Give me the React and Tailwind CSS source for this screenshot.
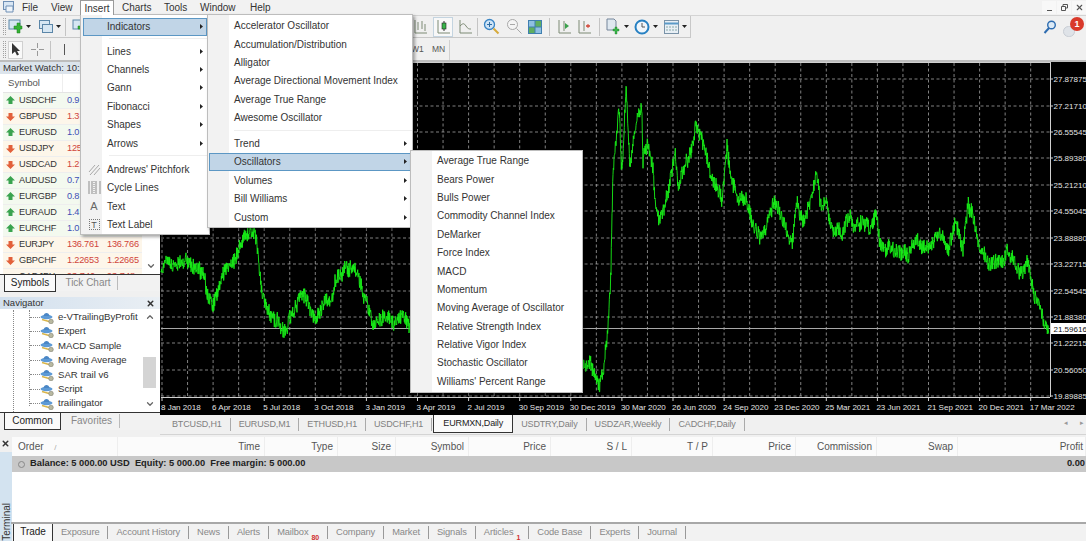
import { useMemo } from 'react';
import { X, ChevronUp, ChevronDown } from 'lucide-react';

const FONT = 'font-["Liberation_Sans",Arial,sans-serif]';

const KEYS = [
  [161, 272], [168, 262], [176, 268], [186, 262], [195, 266], [203, 272], [208, 295], [213, 306], [219, 288], [226, 270],
  [232, 262], [238, 256], [244, 240], [251, 232], [256, 240], [263, 295], [270, 312], [278, 325], [284, 334], [292, 315],
  [300, 295], [308, 306], [315, 320], [322, 305], [330, 302], [338, 275], [348, 267], [354, 270], [362, 290], [370, 312],
  [375, 326], [383, 318], [392, 320], [402, 316], [409, 325], [450, 280], [500, 300], [560, 340],
  [584, 360], [590, 362], [595, 378], [599, 386], [603, 370], [608, 325], [611, 270], [613, 170], [619, 108], [622, 175],
  [626, 86], [630, 170], [638, 115], [642, 108], [643, 160], [648, 140], [653, 170], [656, 212], [660, 222], [667, 195],
  [675, 155], [678, 185], [692, 150], [696, 125], [708, 157], [722, 200], [727, 145], [732, 187], [747, 203], [753, 228],
  [760, 238], [772, 212], [775, 200], [792, 243], [797, 203], [802, 223], [810, 204], [817, 175], [820, 200], [827, 205],
  [832, 233], [843, 233], [850, 217], [857, 228], [863, 220], [872, 230], [877, 214], [880, 245], [893, 250], [908, 254],
  [915, 239], [928, 253], [940, 234], [948, 251], [955, 228], [963, 254], [968, 200], [980, 248], [992, 266], [1005, 260],
  [1008, 247], [1020, 273], [1027, 262], [1037, 303], [1049, 334],
];

// price line: key points with seeded jitter so it looks like real ticks
function buildLine() {
  let seed = 48271;
  const rnd = () => {
    seed = (seed * 16807) % 2147483647;
    return seed / 2147483647 - 0.5;
  };
  const pts = [];
  let walk = 0;
  for (let i = 0; i < KEYS.length - 1; i++) {
    const [x0, y0] = KEYS[i];
    const [x1, y1] = KEYS[i + 1];
    const steps = Math.max(2, Math.round((x1 - x0) * 3));
    for (let s = 0; s < steps; s++) {
      const t = s / steps;
      walk = walk * 0.9 + rnd() * 3.5;
      pts.push(`${(x0 + (x1 - x0) * t).toFixed(1)},${(y0 + (y1 - y0) * t + walk + rnd() * 15).toFixed(1)}`);
    }
  }
  return pts.join(' ');
}

const PRICES = [
  [79, '27.87875'], [106, '27.21710'], [132, '26.55545'], [158, '25.89380'], [185, '25.21210'], [211, '24.55045'], [238, '23.88880'],
  [264, '23.22715'], [291, '22.54545'], [317, '21.88380'], [343, '21.22215'], [370, '20.56050'], [396, '19.89885'],
];
const DATES = [
  '8 Jan 2018', '6 Apr 2018', '5 Jul 2018', '3 Oct 2018', '3 Jan 2019', '3 Apr 2019', '2 Jul 2019', '30 Sep 2019', '30 Dec 2019',
  '30 Mar 2020', '26 Jun 2020', '24 Sep 2020', '23 Dec 2020', '25 Mar 2021', '23 Jun 2021', '21 Sep 2021', '20 Dec 2021', '17 Mar 2022',
];
const GRID_X = Array.from({ length: 35 }, (_, i) => 162 + i * 25.55);

function Chart() {
  const line = useMemo(buildLine, []);
  return (
    <svg viewBox="160 62 926 353" className="block w-[926px] h-[353px] bg-black">
      <g stroke="#b8b8b8" strokeWidth="0.7" strokeDasharray="3 2.5">
        {PRICES.map(([y]) => <line key={y} x1="161" x2="1050" y1={y} y2={y} />)}
        {GRID_X.map((x) => <line key={x} x1={x} x2={x} y1="63" y2="397" />)}
      </g>
      <g stroke="#d0d0d0" strokeWidth="1">
        <line x1="161" x2="1050" y1="62.5" y2="62.5" />
        <line x1="1050.5" x2="1050.5" y1="62" y2="397" />
        <line x1="161" x2="1050" y1="397.5" y2="397.5" />
        <line x1="161" x2="1050" y1="328.5" y2="328.5" stroke="#a8a8a8" />
        {PRICES.map(([y]) => <line key={y} x1="1050" x2="1053" y1={y} y2={y} />)}
        {DATES.map((d, i) => <line key={d} x1={162 + i * 51.1} x2={162 + i * 51.1} y1="397" y2="401" />)}
      </g>
      <polyline points={line} fill="none" stroke="#17ee17" strokeWidth="0.9" strokeLinejoin="round" />
      <g fill="#e4e4e4" fontSize="8">
        {PRICES.map(([y, p]) => <text key={p} x="1053.500" y={y + 3}>{p}</text>)}
        {DATES.map((d, i) => <text key={d} x={161 + i * 51.1} y="410">{d}</text>)}
      </g>
      <rect x="1051" y="323" width="35" height="11" fill="#fff" />
      <text x="1053.500" y="331.500" fontSize="8" fill="#111">21.59616</text>
    </svg>
  );
}

/* ---- small drawn icons ---- */
function Grip() {
  return <div className="w-[3px] h-[17px] ml-[3px] border-x border-dotted border-[#a0a0a0]" />;
}
function Caret() {
  return <svg width="5" height="3" viewBox="0 0 5 3" className="ml-[3px]"><path d="M0 0h5L2.5 3z" fill="#222" /></svg>;
}
function Arrow() {
  return <svg width="3" height="5" viewBox="0 0 3 5" className="ml-auto"><path d="M0 0l3 2.5L0 5z" fill="#222" /></svg>;
}
function Sep() {
  return <div className="w-px h-[18px] bg-[#c4c4c4]" />;
}
function Axes({ children }) {
  return (
    <svg width="16" height="16" viewBox="0 0 16 16" fill="none">
      <path d="M3 1v13h12" stroke="#7d8a74" strokeWidth="1" />
      {children}
    </svg>
  );
}
function NewChart() {
  return (
    <svg width="15" height="15" viewBox="0 0 15 15">
      <rect x="1" y="1" width="11" height="9" fill="#d6e6f2" stroke="#5b86a8" />
      <path d="M7 5h3V2h3v3h2v3h-2v4h-3V8H7z" transform="translate(-1 2)" fill="#35b335" stroke="#1d7d1d" strokeWidth=".5" />
    </svg>
  );
}
function Profiles() {
  return (
    <svg width="15" height="15" viewBox="0 0 15 15" fill="#d6e6f2" stroke="#5b86a8">
      <rect x="1.5" y="1.5" width="10" height="8" />
      <rect x="4.5" y="5.5" width="10" height="8" />
    </svg>
  );
}

function MenuIcon({ kind }) {
  if (kind === 'fork') return <svg width="13" height="13" viewBox="0 0 13 13" stroke="#a8a8a8" fill="none"><path d="M1 9l6-7M2 12l9-10M6 12l6-7" /></svg>;
  if (kind === 'cycle') return <svg width="13" height="13" viewBox="0 0 13 13" stroke="#8c8c8c" fill="none"><path d="M1 0v13M4 0v13M8 0v13M12 0v13" /><path d="M6 0v13" strokeDasharray="1 1" /></svg>;
  if (kind === 'text') return <span className="text-[11px] text-[#666]">A</span>;
  if (kind === 'label') return <span className="w-[11px] h-[11px] border border-dotted border-[#777] text-[9px] leading-[10px] text-center text-[#555]">T</span>;
  return null;
}

function NavIcon() {
  return (
    <svg width="14" height="13" viewBox="0 0 14 13" className="shrink-0">
      <ellipse cx="6.5" cy="6" rx="6" ry="2.2" fill="#5d9ad6" />
      <path d="M3.5 5C4 1 9 1 9.5 5z" fill="#4a86c5" />
      <path d="M2 8.5l7 2" stroke="#d9b54a" strokeWidth="1.4" />
      <circle cx="11" cy="10.5" r="2.3" fill="#b8b8a0" stroke="#808070" strokeWidth=".6" />
    </svg>
  );
}

function TickIcon({ up }) {
  return (
    <svg width="9" height="9" viewBox="0 0 9 9" className="shrink-0">
      {up
        ? <path d="M4.5 0L9 4.5H6.5V8h-4V4.5H0z" fill="#39a34f" />
        : <path d="M4.5 9L0 4.5h2.500V1h4v3.500H9z" fill="#e2603a" />}
    </svg>
  );
}

/* ---- menus ---- */
function MenuRow({ label, arrow, active, icon, left }) {
  return (
    <div className={`flex items-center h-[18.4px] border whitespace-nowrap ${active ? 'bg-[#c1d5e7] border-[#5c97c4]' : 'border-transparent'}`}>
      <span className="w-[20px] flex justify-center shrink-0"><MenuIcon kind={icon} /></span>
      <span className={left}>{label}</span>
      {arrow && <span className="ml-auto pr-[3px] flex"><Arrow /></span>}
    </div>
  );
}

function Menu({ className, children }) {
  return (
    <div className={`absolute z-20 bg-white text-[10px] text-[#333] border border-[#bdbdbd] shadow-[2px_2px_3px_rgba(0,0,0,.35)] ${className}`}>
      <div className="absolute inset-y-0 left-0 w-[21px] bg-[#f2f2f2]" />
      <div className="relative">{children}</div>
    </div>
  );
}

const OSC = [
  'Average True Range', 'Bears Power', 'Bulls Power', 'Commodity Channel Index', 'DeMarker', 'Force Index', 'MACD', 'Momentum',
  'Moving Average of Oscillator', 'Relative Strength Index', 'Relative Vigor Index', 'Stochastic Oscillator', "Williams' Percent Range",
];

function Menus() {
  return (
    <>
      <Menu className="left-[80px] top-[14px] w-[130px] h-[221px] pt-[2.5px]">
        <div className="px-[2px]"><MenuRow label="Indicators" arrow active left="pl-[3px]" /></div>
        <div className="h-[6px] ml-[28px] border-b border-[#eeeeee] -translate-y-[3px]" />
        <div className="px-[2px]">
          {['Lines', 'Channels', 'Gann', 'Fibonacci', 'Shapes', 'Arrows'].map((m) => <MenuRow key={m} label={m} arrow left="pl-[3px]" />)}
        </div>
        <div className="h-[8px] ml-[28px] border-b border-[#eeeeee] -translate-y-[4px]" />
        <div className="px-[2px]">
          <MenuRow label="Andrews' Pitchfork" icon="fork" left="pl-[3px]" />
          <MenuRow label="Cycle Lines" icon="cycle" left="pl-[3px]" />
          <MenuRow label="Text" icon="text" left="pl-[3px]" />
          <MenuRow label="Text Label" icon="label" left="pl-[3px]" />
        </div>
      </Menu>
      <Menu className="left-[207px] top-[14px] w-[206px] h-[214px] pt-[1.5px]">
        <div className="px-px">
          {['Accelerator Oscillator', 'Accumulation/Distribution', 'Alligator', 'Average Directional Movement Index', 'Average True Range', 'Awesome Oscillator'].map((m) => (
            <MenuRow key={m} label={m} left="pl-[4px]" />
          ))}
        </div>
        <div className="h-[7.5px] ml-[26px] border-b border-[#eeeeee] -translate-y-[3px]" />
        <div className="px-px">
          <MenuRow label="Trend" arrow left="pl-[4px]" />
          <MenuRow label="Oscillators" arrow active left="pl-[4px]" />
          <MenuRow label="Volumes" arrow left="pl-[4px]" />
          <MenuRow label="Bill Williams" arrow left="pl-[4px]" />
          <MenuRow label="Custom" arrow left="pl-[4px]" />
        </div>
      </Menu>
      <Menu className="left-[410px] top-[150px] w-[173px] h-[243px] pt-[0.5px]">
        <div className="px-px">
          {OSC.map((m) => <MenuRow key={m} label={m} left="pl-[4px]" />)}
        </div>
      </Menu>
    </>
  );
}

/* ---- top bars ---- */
function MenuBar() {
  return (
    <div className="flex items-center h-[16px] border-b border-[#d4d4d4] text-[10px] text-[#333] bg-[#f2f2f2] relative">
      <svg width="13" height="13" viewBox="0 0 13 13" className="absolute left-[3px] top-px">
        <rect x=".5" y=".5" width="10" height="8" fill="#d8e6f4" stroke="#6f8fb5" />
        <path d="M3 5h7v6H3z" fill="#eef4fa" stroke="#6f8fb5" />
      </svg>
      <span className="ml-[22px] w-[17px]">File</span>
      <span className="ml-[12px] w-[22px]">View</span>
      <span className="ml-[7px] w-[34px] text-center h-[15px] leading-[15px] border-x border-t border-[#9a9a9a] bg-white z-30">Insert</span>
      <span className="ml-[8px] w-[30px]">Charts</span>
      <span className="ml-[12px] w-[25px]">Tools</span>
      <span className="ml-[11px] w-[37px]">Window</span>
      <span className="ml-[13px]">Help</span>
      <div className="ml-auto flex items-center h-[15px] text-[#555]">
        <span className="w-[14px] h-[13px] bg-[#f8f8f8] flex items-end justify-center pb-[3px]"><span className="w-[5px] h-px bg-[#555]" /></span>
        <span className="w-[14px] h-[13px] ml-px bg-[#f8f8f8] flex items-center justify-center">
          <svg width="7" height="7" viewBox="0 0 7 7" fill="none" stroke="#555"><path d="M2 2V.5h4.500V4H5M.5 2.500H4.500V6.500H.5z" /></svg>
        </span>
        <span className="w-[14px] h-[13px] ml-px bg-[#f8f8f8] flex items-center justify-center"><X size={9} strokeWidth={3} className="text-[#555]" /></span>
      </div>
    </div>
  );
}

function ToolbarOne() {
  return (
    <div className="flex h-[23px] bg-[#f0f0f0]">
      <div className="flex items-center w-[691px] h-[22px] border-b border-r border-[#c8c8c8]">
        <Grip />
        <span className="ml-[2px] flex items-center"><NewChart /><Caret /></span>
        <span className="ml-[7px] flex items-center"><Profiles /><Caret /></span>
        <span className="ml-[4px]"><Sep /></span>
        <span className="ml-[6px]"><NewChart /></span>
        <span className="ml-[325px]"><Axes><path d="M6 3v8M10 2v8M13 5v7" stroke="#7d8a74" /></Axes></span>
        <span className="ml-[5px] w-[20px] h-[20px] bg-[#f8f8f8] border border-[#c4d4e0] flex items-center justify-center">
          <Axes><path d="M9 2v10" stroke="#333" /><rect x="7" y="4" width="4" height="6" fill="#39b54a" stroke="#222" strokeWidth=".6" /></Axes>
        </span>
        <span className="ml-[4px]"><Axes><path d="M3 7c3-3 4-3 6 0s3 3 5 3" stroke="#7d8a74" /></Axes></span>
        <span className="ml-[4px]"><Sep /></span>
        <span className="ml-[5px]">
          <svg width="17" height="17" viewBox="0 0 17 17" fill="none">
            <circle cx="6.500" cy="6.500" r="5" fill="#cfe4f6" stroke="#3a85c5" strokeWidth="1.300" />
            <path d="M4 6.500h5M6.500 4v5" stroke="#2e6da6" />
            <path d="M10.500 10.500l5 5" stroke="#d6aa3c" strokeWidth="2" />
          </svg>
        </span>
        <span className="ml-[6px]">
          <svg width="17" height="17" viewBox="0 0 17 17" fill="none" stroke="#a8a8a8">
            <circle cx="6.500" cy="6.500" r="5" fill="#f4f4f4" />
            <path d="M4 6.500h5M10.500 10.500l5 5" />
          </svg>
        </span>
        <span className="ml-[5px]">
          <svg width="14" height="14" viewBox="0 0 14 14">
            <rect width="14" height="14" fill="#3f7fb0" />
            <rect x="1" y="1" width="5.500" height="5.500" fill="#8fc0e2" />
            <rect x="7.500" y="1" width="5.500" height="5.500" fill="#5fae60" />
            <rect x="1" y="7.500" width="5.500" height="5.500" fill="#5fae60" />
            <rect x="7.500" y="7.500" width="5.500" height="5.500" fill="#8fc0e2" />
          </svg>
        </span>
        <span className="ml-[7px]"><Sep /></span>
        <span className="ml-[6px]"><Axes><path d="M8 2v10" stroke="#7d8a74" /><path d="M9 4l4 3-4 3z" fill="#3aa14c" /></Axes></span>
        <span className="ml-[4px]"><Axes><path d="M8 2v10" stroke="#7d8a74" /><path d="M10 7h4" stroke="#d04030" strokeWidth="1.500" /><path d="M12 5v4" stroke="#d04030" /></Axes></span>
        <span className="ml-[7px]"><Sep /></span>
        <span className="ml-[6px] flex items-center">
          <svg width="15" height="17" viewBox="0 0 15 17">
            <path d="M1 1h7l2 2v9H1z" fill="#dfe8f0" stroke="#74859a" />
            <path d="M8 9h2V7h2v2h2v2h-2v3h-2v-3H8z" transform="translate(-1 2)" fill="#39b54a" stroke="#1f7f2a" strokeWidth=".4" />
          </svg>
          <Caret />
        </span>
        <span className="ml-[5px] flex items-center">
          <svg width="16" height="16" viewBox="0 0 16 16" fill="none">
            <circle cx="8" cy="8" r="6.500" fill="#f0f6fb" stroke="#2680c2" strokeWidth="2" />
            <path d="M8 4v4h3" stroke="#555" />
          </svg>
          <Caret />
        </span>
        <span className="ml-[6px] flex items-center">
          <svg width="15" height="14" viewBox="0 0 15 14" fill="none">
            <rect x=".5" y=".5" width="14" height="13" fill="#e8eff5" stroke="#7a93a8" />
            <path d="M.5 3.500h14" stroke="#5a9ac8" strokeWidth="2" />
            <path d="M2 7h11M2 10h11" stroke="#8aa" strokeDasharray="2 1" />
          </svg>
          <Caret />
        </span>
      </div>
      <div className="ml-auto flex items-center pr-[2px] h-[22px]">
        <svg width="14" height="15" viewBox="0 0 14 15" fill="none">
          <circle cx="8.500" cy="5" r="3.800" fill="#dceaf6" stroke="#2e6cb0" strokeWidth="1.400" />
          <path d="M6 8L1.500 13" stroke="#2e6cb0" strokeWidth="2" />
        </svg>
        <span className="relative ml-[6px] w-[21px] h-[20px]">
          <span className="absolute left-0 bottom-0 w-[12px] h-[11px] rounded-full bg-[#dfe3e8] border border-[#c8cdd4]" />
          <span className="absolute right-0 top-0 w-[14px] h-[14px] rounded-full bg-[#d93a2b] text-white text-[9px] font-bold leading-[14px] text-center">1</span>
        </span>
      </div>
    </div>
  );
}

function ToolbarTwo() {
  return (
    <div className="flex items-center h-[23px] border-b-2 border-[#bdbdbd] bg-[#f0f0f0] text-[8.5px] text-[#555]">
      <Grip />
      <span className="ml-[2px] w-[15px] h-[18px] bg-[#f9f9f9] border border-[#d0d0d0] flex items-center justify-center">
        <svg width="9" height="13" viewBox="0 0 9 13"><path d="M1 0v11l3-2.500 2 4 2-1-2-3.500h3z" fill="#333" /></svg>
      </span>
      <span className="ml-[8px]">
        <svg width="13" height="13" viewBox="0 0 13 13" stroke="#999"><path d="M6.500 0v5M6.500 8v5M0 6.500h5M8 6.500h5" /></svg>
      </span>
      <span className="ml-[6px]"><Sep /></span>
      <span className="ml-[13px] w-px h-[11px] bg-[#555]" />
      <span className="ml-[346px] w-[11px]">W1</span>
      <span className="ml-[10px] w-[14px]">MN</span>
      <span className="ml-[3px] w-px h-[20px] bg-[#d0d0d0]" />
    </div>
  );
}

/* ---- left panes ---- */
const SYMBOLS = [
  ['USDCHF', true, '0.9'], ['GBPUSD', false, '1.3'], ['EURUSD', true, '1.0'], ['USDJPY', false, '125'], ['USDCAD', false, '1.2'], ['AUDUSD', true, '0.7'],
  ['EURGBP', true, '0.8'], ['EURAUD', true, '1.4'], ['EURCHF', true, '1.0'], ['EURJPY', false, '136.761', '136.766'], ['GBPCHF', false, '1.22653', '1.22665'],
];

function PaneTab({ active, children, w }) {
  return active
    ? <span className={`${w} h-[17px] bg-[#fafafa] border-x border-b border-[#333] text-center text-[#222] leading-[16px]`}>{children}</span>
    : <span className={`${w} h-[14px] mt-px text-center text-[#888] border-r border-[#bbb] leading-[14px]`}>{children}</span>;
}

function MarketWatch() {
  return (
    <div className="h-[229px] flex flex-col">
      <div className="h-[12px] leading-[12px] bg-[#dce4ec] text-[9.5px] text-[#333] pl-[3px]">Market Watch: 10:2</div>
      <div className="flex flex-1 min-h-0 bg-white pl-[3px]">
        <div className="w-[139px] overflow-hidden text-[9.2px]">
          <div className="flex h-[19px] items-center text-[#555] border-b border-[#e4e4e4] text-[9.6px]">
            <span className="w-[59px] pl-[5px]">Symbol</span>
            <span className="w-[40px] border-l border-[#eee] h-full" />
          </div>
          {SYMBOLS.map(([s, up, bid, ask]) => (
            <div key={s} className={`flex h-[16px] items-center border-b border-[#eeeeee] ${up ? 'bg-[#f3f9ef]' : 'bg-[#fdf6ea]'}`}>
              <span className="w-[59px] flex items-center pl-[3px] gap-[4px] text-[#333] tracking-[-0.2px]">
                <TickIcon up={up} />{s}
              </span>
              <span className={`w-[40px] pl-[5px] tracking-[-0.2px] ${up ? 'text-[#3d4fb5]' : 'text-[#d0453a]'}`}>{bid}</span>
              <span className="w-[40px] pl-[5px] tracking-[-0.2px] text-[#d0453a]">{ask}</span>
            </div>
          ))}
          <div className="flex h-[6px] overflow-hidden bg-[#fdf6ea] text-[#d0453a] leading-[14px]">
            <span className="w-[59px] pl-[16px] text-[#333]">CADJPY</span>
            <span className="w-[40px] pl-[5px]">93.740</span>
            <span className="w-[40px] pl-[5px]">93.748</span>
          </div>
        </div>
        <div className="flex-1 flex items-end justify-center pb-[3px]"><ChevronDown size={10} strokeWidth={3} className="text-[#666]" /></div>
      </div>
      <div className="h-[17px] flex border-t border-[#333] pl-[4px] gap-[3px] bg-[#f2f2f2] text-[10px]">
        <PaneTab active w="w-[52px]">Symbols</PaneTab>
        <PaneTab w="w-[59px]">Tick Chart</PaneTab>
      </div>
    </div>
  );
}

const EXPERTS = ['e-VTrailingByProfit', 'Expert', 'MACD Sample', 'Moving Average', 'SAR trail v6', 'Script', 'trailingator'];

function Navigator() {
  return (
    <div className="mt-[6px] flex flex-col h-[133px]">
      <div className="h-[12px] flex items-center justify-between bg-gradient-to-r from-[#d2e0ee] to-[#eaeff4] text-[9.5px] text-[#333] pl-[3px] pr-[5px]">
        Navigator <X size={9} strokeWidth={4} className="text-[#333]" />
      </div>
      <div className="flex h-[103px] bg-white pl-[3px] overflow-hidden text-[9.6px]">
        <div className="w-[139px] pl-[10px] pt-[1px] flex">
          <div className="w-[16px] border-l border-dotted border-[#888]" />
          <div className="border-l border-dotted border-[#888] h-[96px]">
            {EXPERTS.map((n) => (
              <div key={n} className="flex items-center h-[14.400px] text-[#333] whitespace-nowrap">
                <span className="w-[10px] shrink-0 border-b border-dotted border-[#888]" />
                <NavIcon />
                <span className="ml-[4px]">{n}</span>
              </div>
            ))}
          </div>
        </div>
        <div className="w-[13px] ml-px flex flex-col items-center py-[3px]">
          <ChevronUp size={10} strokeWidth={3} className="text-[#666]" />
          <div className="w-full h-[31px] mt-[35px] bg-[#d4d4d4]" />
          <ChevronDown size={10} strokeWidth={3} className="text-[#666] mt-auto" />
        </div>
      </div>
      <div className="h-[18px] flex border-t border-[#333] pl-[4px] gap-[3px] bg-[#f2f2f2] text-[10px]">
        <PaneTab active w="w-[57px]">Common</PaneTab>
        <PaneTab w="w-[56px]">Favorites</PaneTab>
      </div>
    </div>
  );
}

/* ---- chart tabs + terminal ---- */
const CHART_TABS = ['BTCUSD,H1', 'EURUSD,M1', 'ETHUSD,H1', 'USDCHF,H1'];
const CHART_TABS2 = ['USDTRY,Daily', 'USDZAR,Weekly', 'CADCHF,Daily'];

function ChartTabs() {
  return (
    <div className="flex h-[20px] items-start bg-[#f0f0f0] text-[9px] tracking-[-0.15px] text-[#808080] border-b border-[#d4d4d4] pl-[4px]">
      {CHART_TABS.map((t) => (
        <span key={t} className="px-[8px] mt-[3px] h-[13px] leading-[13px] border-r border-[#aaa]">{t}</span>
      ))}
      <span className="w-[80px] h-[18px] leading-[17px] ml-[1px] text-center text-[#222] bg-[#fafafa] border-x border-b border-[#333]">EURMXN,Daily</span>
      {CHART_TABS2.map((t) => (
        <span key={t} className="px-[8px] mt-[3px] h-[13px] leading-[13px] border-r border-[#aaa]">{t}</span>
      ))}
      <span className="ml-auto mt-[3px] pr-[2px] flex gap-[12px] text-[7px] text-[#999]"><span>◂</span><span>▸</span></span>
    </div>
  );
}

const COLS = [
  ['Time', 'w-[147px]'], ['Type', 'w-[73px]'], ['Size', 'w-[58px]'], ['Symbol', 'w-[73px]'], ['Price', 'w-[82px]'], ['S / L', 'w-[81px]'],
  ['T / P', 'w-[81px]'], ['Price', 'w-[83px]'], ['Commission', 'w-[81px]'], ['Swap', 'w-[81px]'], ['Profit', 'w-[128px]'],
];

const TERM_TABS = [
  ['Exposure', ''], ['Account History', ''], ['News', ''], ['Alerts', ''], ['Mailbox', '80'], ['Company', ''], ['Market', ''],
  ['Signals', ''], ['Articles', '1'], ['Code Base', ''], ['Experts', ''], ['Journal', ''],
];

function Terminal() {
  return (
    <div className="flex h-[104px] bg-white">
      <div className="w-[12px] flex flex-col bg-[#f0f0f0]">
        <X size={9} strokeWidth={4} className="text-[#333] ml-px mt-[2px] shrink-0" />
        <div className="flex-1 mt-[4px] bg-[#d3e3f0] flex items-end justify-center overflow-hidden">
          <span className="[writing-mode:vertical-rl] rotate-180 text-[10px] leading-[11px] text-[#333]">Terminal</span>
        </div>
      </div>
      <div className="flex-1 flex flex-col min-w-0">
        <div className="flex h-[19px] items-center bg-[#fbfbfb] text-[#555] text-[10px]">
          <span className="w-[106px] pl-[6px] h-full border-r border-[#eee] leading-[19px]">Order <span className="ml-[8px] text-[8px] text-[#aaa]">/</span></span>
          {COLS.map(([c, w], i) => (
            <span key={i} className={`${w} h-full leading-[19px] text-right pr-[4px] last:pr-[2px] border-r border-[#eee]`}>{c}</span>
          ))}
        </div>
        <div className="flex h-[16px] items-center justify-between bg-[#c8c8c8] font-bold text-[#222] text-[9.3px] pr-px">
          <span className="flex items-center pl-[6px]">
            <span className="w-[7px] h-[7px] rounded-full border border-[#888] mr-[5px]" />
            Balance: 5 000.00 USD&nbsp;&nbsp;Equity: 5 000.00&nbsp;&nbsp;Free margin: 5 000.00
          </span>
          <span>0.00</span>
        </div>
        <div className="flex-1" />
        <div className="h-[2px] bg-[#a8a8a8] -ml-[1px]" />
        <div className="flex h-[17px] bg-[#f2f2f2] text-[9.3px] tracking-[-0.1px] text-[#888] pl-[1px] items-start">
          <span className="w-[40px] h-[17px] bg-[#fafafa] text-center text-[#222] text-[10px] leading-[16px] border-x border-[#333]">Trade</span>
          {TERM_TABS.map(([t, n]) => (
            <span key={t} className="mt-[2px] h-[13px] leading-[13px] px-[8px] border-r border-[#999] flex">
              {t}
              {n && <span className="text-[7px] font-bold text-[#d03030] mt-[5px] ml-[3px]">{n}</span>}
            </span>
          ))}
        </div>
      </div>
    </div>
  );
}

export default function App() {
  return (
    <div className={`relative w-[1086px] h-[541px] overflow-hidden bg-[#f0f0f0] text-[10px] ${FONT}`}>
      <MenuBar />
      <ToolbarOne />
      <ToolbarTwo />
      <div className="flex h-[375px]">
        <div className="w-[160px] shrink-0">
          <MarketWatch />
          <Navigator />
        </div>
        <div className="w-[926px]">
          <Chart />
          <ChartTabs />
        </div>
      </div>
      <Terminal />
      <Menus />
    </div>
  );
}
